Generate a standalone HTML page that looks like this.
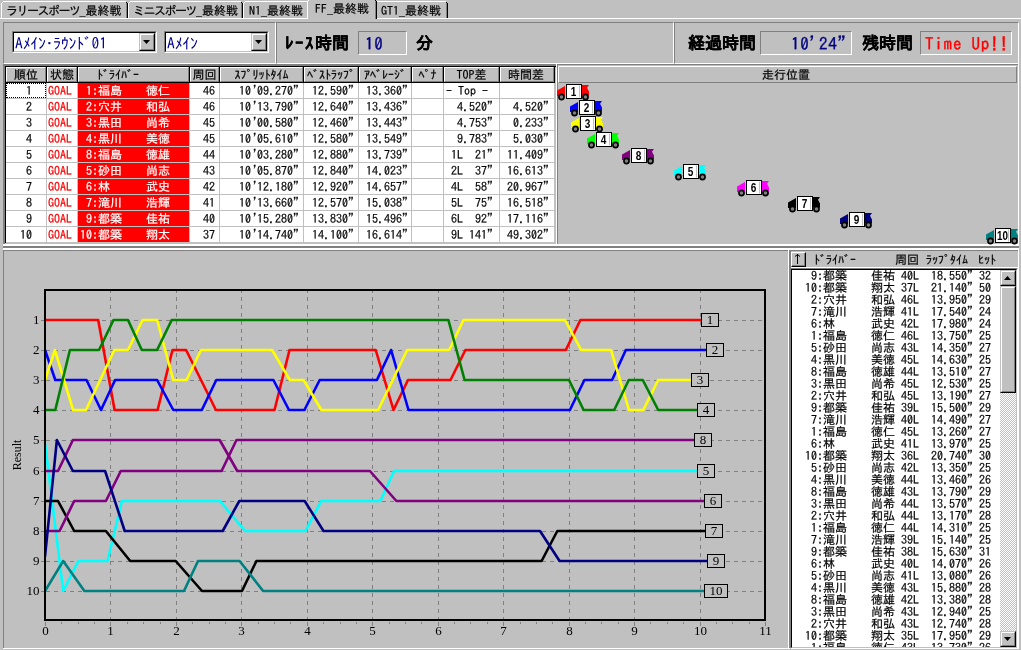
<!DOCTYPE html>
<html lang="ja"><head><meta charset="utf-8"><title>Race</title><style>
html,body{margin:0;padding:0;}
body{width:1021px;height:650px;background:#c0c0c0;overflow:hidden;position:relative;font-family:"IPAGothic","Liberation Mono",monospace;font-size:12px;color:#000;}
div,span{box-sizing:border-box;}
#app{position:absolute;left:0;top:0;width:1021px;height:650px;will-change:transform;-webkit-text-stroke:0.2px;}
.a{position:absolute;}
.t{position:absolute;white-space:pre;line-height:1;}
</style></head><body>
<div id="app">
<div class="a" style="left:0px;top:18px;width:1021px;height:1px;background:#fff"></div>
<div class="a" style="left:1px;top:3px;width:1px;height:15px;background:#fff"></div>
<div class="a" style="left:2px;top:2px;width:1px;height:1px;background:#fff"></div>
<div class="a" style="left:3px;top:1px;width:123px;height:1px;background:#fff"></div>
<div class="a" style="left:126px;top:3px;width:1px;height:15px;background:#808080"></div>
<div class="a" style="left:127px;top:3px;width:1px;height:15px;background:#000"></div>
<div class="a" style="left:126px;top:2px;width:1px;height:1px;background:#000"></div>
<div class="t" style="left:6px;top:4px;font-family:'IPAGothic','Liberation Mono',monospace;font-size:12px;"><span style="letter-spacing:-1.5px">ラリースポーツ</span>_最終戦</div>
<div class="a" style="left:128px;top:3px;width:1px;height:15px;background:#fff"></div>
<div class="a" style="left:129px;top:2px;width:1px;height:1px;background:#fff"></div>
<div class="a" style="left:130px;top:1px;width:111px;height:1px;background:#fff"></div>
<div class="a" style="left:241px;top:3px;width:1px;height:15px;background:#808080"></div>
<div class="a" style="left:242px;top:3px;width:1px;height:15px;background:#000"></div>
<div class="a" style="left:241px;top:2px;width:1px;height:1px;background:#000"></div>
<div class="t" style="left:133px;top:4px;font-family:'IPAGothic','Liberation Mono',monospace;font-size:12px;"><span style="letter-spacing:-1.5px">ミニスポーツ</span>_最終戦</div>
<div class="a" style="left:243px;top:3px;width:1px;height:15px;background:#fff"></div>
<div class="a" style="left:244px;top:2px;width:1px;height:1px;background:#fff"></div>
<div class="a" style="left:245px;top:1px;width:62px;height:1px;background:#fff"></div>
<div class="a" style="left:307px;top:3px;width:1px;height:15px;background:#808080"></div>
<div class="a" style="left:308px;top:3px;width:1px;height:15px;background:#000"></div>
<div class="a" style="left:307px;top:2px;width:1px;height:1px;background:#000"></div>
<div class="t" style="left:249px;top:4px;font-family:'IPAGothic','Liberation Mono',monospace;font-size:12px;">N1_最終戦</div>
<div class="a" style="left:377px;top:1px;width:69px;height:1px;background:#fff"></div>
<div class="a" style="left:446px;top:3px;width:1px;height:15px;background:#808080"></div>
<div class="a" style="left:447px;top:3px;width:1px;height:15px;background:#000"></div>
<div class="a" style="left:446px;top:2px;width:1px;height:1px;background:#000"></div>
<div class="t" style="left:381px;top:4px;font-family:'IPAGothic','Liberation Mono',monospace;font-size:12px;">GT1_最終戦</div>
<div class="a" style="left:307px;top:0px;width:70px;height:20px;background:#c0c0c0"></div>
<div class="a" style="left:307px;top:1px;width:1px;height:18px;background:#fff"></div>
<div class="a" style="left:308px;top:0px;width:1px;height:1px;background:#fff"></div>
<div class="a" style="left:309px;top:-1px;width:66px;height:1px;background:#fff"></div>
<div class="a" style="left:375px;top:1px;width:1px;height:18px;background:#808080"></div>
<div class="a" style="left:376px;top:1px;width:1px;height:18px;background:#000"></div>
<div class="a" style="left:375px;top:0px;width:1px;height:1px;background:#000"></div>
<div class="t" style="left:315px;top:2px;font-family:'IPAGothic','Liberation Mono',monospace;font-size:12px;">FF_最終戦</div>
<div class="a" style="left:3px;top:22px;width:273px;height:42px;border-top:1px solid #808080;border-left:1px solid #808080;border-bottom:1px solid #fff;border-right:1px solid #fff;"></div>
<div class="a" style="left:276px;top:22px;width:398px;height:42px;border-top:1px solid #808080;border-left:1px solid #808080;border-bottom:1px solid #fff;border-right:1px solid #fff;"></div>
<div class="a" style="left:674px;top:22px;width:345px;height:42px;border-top:1px solid #808080;border-left:1px solid #808080;border-bottom:1px solid #fff;border-right:1px solid #fff;"></div>
<div class="a" style="left:12px;top:31px;width:145px;height:22px;border-top:1px solid #808080;border-left:1px solid #808080;border-bottom:1px solid #fff;border-right:1px solid #fff;"></div>
<div class="a" style="left:13px;top:32px;width:143px;height:20px;border-top:1px solid #000;border-left:1px solid #000;border-bottom:1px solid #c0c0c0;border-right:1px solid #c0c0c0;background:#fff;"></div>
<div class="a" style="left:139px;top:33px;width:16px;height:18px;border-top:1px solid #c0c0c0;border-left:1px solid #c0c0c0;border-bottom:1px solid #000;border-right:1px solid #000;"></div>
<div class="a" style="left:140px;top:34px;width:14px;height:16px;border-top:1px solid #fff;border-left:1px solid #fff;border-bottom:1px solid #808080;border-right:1px solid #808080;background:#c0c0c0;"></div>
<svg class="a" style="left:143px;top:40px" width="7" height="4"><polygon points="0,0 7,0 3.5,4" fill="#000"/></svg>
<div class="t" style="left:15px;top:36px;color:#000090;font-size:15.5px;letter-spacing:-0.1px;-webkit-text-stroke:0;">Aﾒｲﾝ･ﾗｳﾝﾄ<span style="position:relative;left:-2px">ﾞ</span>01</div>
<div class="a" style="left:164px;top:31px;width:105px;height:22px;border-top:1px solid #808080;border-left:1px solid #808080;border-bottom:1px solid #fff;border-right:1px solid #fff;"></div>
<div class="a" style="left:165px;top:32px;width:103px;height:20px;border-top:1px solid #000;border-left:1px solid #000;border-bottom:1px solid #c0c0c0;border-right:1px solid #c0c0c0;background:#fff;"></div>
<div class="a" style="left:251px;top:33px;width:16px;height:18px;border-top:1px solid #c0c0c0;border-left:1px solid #c0c0c0;border-bottom:1px solid #000;border-right:1px solid #000;"></div>
<div class="a" style="left:252px;top:34px;width:14px;height:16px;border-top:1px solid #fff;border-left:1px solid #fff;border-bottom:1px solid #808080;border-right:1px solid #808080;background:#c0c0c0;"></div>
<svg class="a" style="left:255px;top:40px" width="7" height="4"><polygon points="0,0 7,0 3.5,4" fill="#000"/></svg>
<div class="t" style="left:167px;top:36px;color:#000090;font-size:15.5px;letter-spacing:-0.1px;-webkit-text-stroke:0;">Aﾒｲﾝ</div>
<div class="t" style="left:285px;top:34px;font-weight:bold;font-size:17px;"><span style="letter-spacing:1.5px">ﾚｰｽ</span>時間</div>
<div class="a" style="left:358px;top:31px;width:49px;height:24px;border-top:1px solid #808080;border-left:1px solid #808080;border-bottom:1px solid #fff;border-right:1px solid #fff;"></div>
<div class="t" style="left:365px;top:35px;color:#000080;font-size:17px;-webkit-text-stroke:0.35px;letter-spacing:0.8px;">10</div>
<div class="t" style="left:416px;top:34px;font-weight:bold;font-size:17px;">分</div>
<div class="t" style="left:688px;top:34px;font-weight:bold;font-size:17px;">経過時間</div>
<div class="a" style="left:760px;top:31px;width:92px;height:24px;border-top:1px solid #808080;border-left:1px solid #808080;border-bottom:1px solid #fff;border-right:1px solid #fff;"></div>
<div class="t" style="left:791px;top:35px;color:#000080;font-size:17px;-webkit-text-stroke:0.35px;letter-spacing:0.8px;">10'24"</div>
<div class="t" style="left:862px;top:34px;font-weight:bold;font-size:17px;">残時間</div>
<div class="a" style="left:920px;top:31px;width:92px;height:24px;border-top:1px solid #808080;border-left:1px solid #808080;border-bottom:1px solid #fff;border-right:1px solid #fff;"></div>
<div class="t" style="left:925px;top:35px;color:#ff0000;font-size:17px;-webkit-text-stroke:0.35px;letter-spacing:0.8px;">Time Up!!</div>
<div class="a" style="left:3px;top:64px;width:555px;height:1px;background:#808080"></div>
<div class="a" style="left:3px;top:64px;width:1px;height:181px;background:#808080"></div>
<div class="a" style="left:4px;top:65px;width:553px;height:1px;background:#808080"></div>
<div class="a" style="left:4px;top:65px;width:1px;height:179px;background:#808080"></div>
<div class="a" style="left:5px;top:66px;width:551px;height:1px;background:#000"></div>
<div class="a" style="left:5px;top:66px;width:1px;height:177px;background:#000"></div>
<div class="a" style="left:6px;top:83px;width:549px;height:160px;background:#fff"></div>
<div class="a" style="left:6px;top:67px;width:40px;height:15px;background:#c0c0c0;border-top:1px solid #fff;border-left:1px solid #fff;border-bottom:1px solid #808080;border-right:1px solid #808080;"></div>
<div class="a" style="left:46px;top:67px;width:1px;height:16px;background:#000"></div>
<div class="t" style="left:6px;top:68px;width:40px;text-align:center;font-size:12px;">順位</div>
<div class="a" style="left:47px;top:67px;width:30px;height:15px;background:#c0c0c0;border-top:1px solid #fff;border-left:1px solid #fff;border-bottom:1px solid #808080;border-right:1px solid #808080;"></div>
<div class="a" style="left:77px;top:67px;width:1px;height:16px;background:#000"></div>
<div class="t" style="left:47px;top:68px;width:30px;text-align:center;font-size:12px;">状態</div>
<div class="a" style="left:78px;top:67px;width:111px;height:15px;background:#c0c0c0;border-top:1px solid #fff;border-left:1px solid #fff;border-bottom:1px solid #808080;border-right:1px solid #808080;"></div>
<div class="a" style="left:189px;top:67px;width:1px;height:16px;background:#000"></div>
<div class="t" style="left:97px;top:68px;">ﾄ<span style="position:relative;left:-2px">ﾞ</span>ﾗｲﾊ<span style="position:relative;left:-2px">ﾞ</span>ｰ</div>
<div class="a" style="left:190px;top:67px;width:29px;height:15px;background:#c0c0c0;border-top:1px solid #fff;border-left:1px solid #fff;border-bottom:1px solid #808080;border-right:1px solid #808080;"></div>
<div class="a" style="left:219px;top:67px;width:1px;height:16px;background:#000"></div>
<div class="t" style="left:190px;top:68px;width:29px;text-align:center;font-size:12px;">周回</div>
<div class="a" style="left:220px;top:67px;width:83px;height:15px;background:#c0c0c0;border-top:1px solid #fff;border-left:1px solid #fff;border-bottom:1px solid #808080;border-right:1px solid #808080;"></div>
<div class="a" style="left:303px;top:67px;width:1px;height:16px;background:#000"></div>
<div class="t" style="left:220px;top:68px;width:83px;text-align:center;font-size:12px;">ｽﾌ<span style="position:relative;left:-2px">ﾟ</span>ﾘｯﾄﾀｲﾑ</div>
<div class="a" style="left:304px;top:67px;width:54px;height:15px;background:#c0c0c0;border-top:1px solid #fff;border-left:1px solid #fff;border-bottom:1px solid #808080;border-right:1px solid #808080;"></div>
<div class="a" style="left:358px;top:67px;width:1px;height:16px;background:#000"></div>
<div class="t" style="left:304px;top:68px;width:54px;text-align:center;font-size:12px;">ﾍ<span style="position:relative;left:-2px">ﾞ</span>ｽﾄﾗｯﾌ<span style="position:relative;left:-2px">ﾟ</span></div>
<div class="a" style="left:359px;top:67px;width:52px;height:15px;background:#c0c0c0;border-top:1px solid #fff;border-left:1px solid #fff;border-bottom:1px solid #808080;border-right:1px solid #808080;"></div>
<div class="a" style="left:411px;top:67px;width:1px;height:16px;background:#000"></div>
<div class="t" style="left:359px;top:68px;width:52px;text-align:center;font-size:12px;">ｱﾍ<span style="position:relative;left:-2px">ﾞ</span>ﾚｰｼ<span style="position:relative;left:-2px">ﾞ</span></div>
<div class="a" style="left:412px;top:67px;width:31px;height:15px;background:#c0c0c0;border-top:1px solid #fff;border-left:1px solid #fff;border-bottom:1px solid #808080;border-right:1px solid #808080;"></div>
<div class="a" style="left:443px;top:67px;width:1px;height:16px;background:#000"></div>
<div class="t" style="left:412px;top:68px;width:31px;text-align:center;font-size:12px;">ﾍ<span style="position:relative;left:-2px">ﾟ</span>ﾅ</div>
<div class="a" style="left:444px;top:67px;width:55px;height:15px;background:#c0c0c0;border-top:1px solid #fff;border-left:1px solid #fff;border-bottom:1px solid #808080;border-right:1px solid #808080;"></div>
<div class="a" style="left:499px;top:67px;width:1px;height:16px;background:#000"></div>
<div class="t" style="left:444px;top:68px;width:55px;text-align:center;font-size:12px;">TOP差</div>
<div class="a" style="left:500px;top:67px;width:54px;height:15px;background:#c0c0c0;border-top:1px solid #fff;border-left:1px solid #fff;border-bottom:1px solid #808080;border-right:1px solid #808080;"></div>
<div class="a" style="left:554px;top:67px;width:1px;height:16px;background:#000"></div>
<div class="t" style="left:508px;top:68px;">時間差</div>
<div class="a" style="left:6px;top:82px;width:549px;height:1px;background:#000"></div>
<div class="a" style="left:6px;top:98px;width:549px;height:1px;background:#c0c0c0"></div>
<div class="a" style="left:78px;top:83px;width:112px;height:15px;background:#ff0000"></div>
<div class="t" style="right:989px;top:84px;">1</div>
<div class="t" style="left:48px;top:84px;color:#ff0000">GOAL</div>
<div class="t" style="left:80px;top:84px;color:#fff"> 1:福島　　徳仁</div>
<div class="t" style="right:806px;top:84px;">46</div>
<div class="t" style="right:722px;top:84px;">10<span style="position:relative;left:2px">'</span>09.270"</div>
<div class="t" style="right:667px;top:84px;">12.590"</div>
<div class="t" style="right:613px;top:84px;">13.360"</div>
<div class="t" style="left:446px;top:84px;">- Top -</div>
<div class="t" style="right:472px;top:84px;"></div>
<div class="a" style="left:6px;top:114px;width:549px;height:1px;background:#c0c0c0"></div>
<div class="a" style="left:78px;top:99px;width:112px;height:15px;background:#ff0000"></div>
<div class="t" style="right:989px;top:100px;">2</div>
<div class="t" style="left:48px;top:100px;color:#ff0000">GOAL</div>
<div class="t" style="left:80px;top:100px;color:#fff"> 2:穴井　　和弘</div>
<div class="t" style="right:806px;top:100px;">46</div>
<div class="t" style="right:722px;top:100px;">10<span style="position:relative;left:2px">'</span>13.790"</div>
<div class="t" style="right:667px;top:100px;">12.640"</div>
<div class="t" style="right:613px;top:100px;">13.436"</div>
<div class="t" style="right:528px;top:100px;">  4.520"</div>
<div class="t" style="right:472px;top:100px;">4.520"</div>
<div class="a" style="left:6px;top:130px;width:549px;height:1px;background:#c0c0c0"></div>
<div class="a" style="left:78px;top:115px;width:112px;height:15px;background:#ff0000"></div>
<div class="t" style="right:989px;top:116px;">3</div>
<div class="t" style="left:48px;top:116px;color:#ff0000">GOAL</div>
<div class="t" style="left:80px;top:116px;color:#fff"> 3:黒田　　尚希</div>
<div class="t" style="right:806px;top:116px;">45</div>
<div class="t" style="right:722px;top:116px;">10<span style="position:relative;left:2px">'</span>00.580"</div>
<div class="t" style="right:667px;top:116px;">12.460"</div>
<div class="t" style="right:613px;top:116px;">13.443"</div>
<div class="t" style="right:528px;top:116px;">  4.753"</div>
<div class="t" style="right:472px;top:116px;">0.233"</div>
<div class="a" style="left:6px;top:146px;width:549px;height:1px;background:#c0c0c0"></div>
<div class="a" style="left:78px;top:131px;width:112px;height:15px;background:#ff0000"></div>
<div class="t" style="right:989px;top:132px;">4</div>
<div class="t" style="left:48px;top:132px;color:#ff0000">GOAL</div>
<div class="t" style="left:80px;top:132px;color:#fff"> 4:黒川　　美徳</div>
<div class="t" style="right:806px;top:132px;">45</div>
<div class="t" style="right:722px;top:132px;">10<span style="position:relative;left:2px">'</span>05.610"</div>
<div class="t" style="right:667px;top:132px;">12.580"</div>
<div class="t" style="right:613px;top:132px;">13.549"</div>
<div class="t" style="right:528px;top:132px;">  9.783"</div>
<div class="t" style="right:472px;top:132px;">5.030"</div>
<div class="a" style="left:6px;top:162px;width:549px;height:1px;background:#c0c0c0"></div>
<div class="a" style="left:78px;top:147px;width:112px;height:15px;background:#ff0000"></div>
<div class="t" style="right:989px;top:148px;">5</div>
<div class="t" style="left:48px;top:148px;color:#ff0000">GOAL</div>
<div class="t" style="left:80px;top:148px;color:#fff"> 8:福島　　徳雄</div>
<div class="t" style="right:806px;top:148px;">44</div>
<div class="t" style="right:722px;top:148px;">10<span style="position:relative;left:2px">'</span>03.280"</div>
<div class="t" style="right:667px;top:148px;">12.880"</div>
<div class="t" style="right:613px;top:148px;">13.739"</div>
<div class="t" style="right:528px;top:148px;">1L  21"</div>
<div class="t" style="right:472px;top:148px;">11.409"</div>
<div class="a" style="left:6px;top:178px;width:549px;height:1px;background:#c0c0c0"></div>
<div class="a" style="left:78px;top:163px;width:112px;height:15px;background:#ff0000"></div>
<div class="t" style="right:989px;top:164px;">6</div>
<div class="t" style="left:48px;top:164px;color:#ff0000">GOAL</div>
<div class="t" style="left:80px;top:164px;color:#fff"> 5:砂田　　尚志</div>
<div class="t" style="right:806px;top:164px;">43</div>
<div class="t" style="right:722px;top:164px;">10<span style="position:relative;left:2px">'</span>05.870"</div>
<div class="t" style="right:667px;top:164px;">12.840"</div>
<div class="t" style="right:613px;top:164px;">14.023"</div>
<div class="t" style="right:528px;top:164px;">2L  37"</div>
<div class="t" style="right:472px;top:164px;">16.613"</div>
<div class="a" style="left:6px;top:194px;width:549px;height:1px;background:#c0c0c0"></div>
<div class="a" style="left:78px;top:179px;width:112px;height:15px;background:#ff0000"></div>
<div class="t" style="right:989px;top:180px;">7</div>
<div class="t" style="left:48px;top:180px;color:#ff0000">GOAL</div>
<div class="t" style="left:80px;top:180px;color:#fff"> 6:林　　　武史</div>
<div class="t" style="right:806px;top:180px;">42</div>
<div class="t" style="right:722px;top:180px;">10<span style="position:relative;left:2px">'</span>12.180"</div>
<div class="t" style="right:667px;top:180px;">12.920"</div>
<div class="t" style="right:613px;top:180px;">14.657"</div>
<div class="t" style="right:528px;top:180px;">4L  58"</div>
<div class="t" style="right:472px;top:180px;">20.967"</div>
<div class="a" style="left:6px;top:210px;width:549px;height:1px;background:#c0c0c0"></div>
<div class="a" style="left:78px;top:195px;width:112px;height:15px;background:#ff0000"></div>
<div class="t" style="right:989px;top:196px;">8</div>
<div class="t" style="left:48px;top:196px;color:#ff0000">GOAL</div>
<div class="t" style="left:80px;top:196px;color:#fff"> 7:滝川　　浩輝</div>
<div class="t" style="right:806px;top:196px;">41</div>
<div class="t" style="right:722px;top:196px;">10<span style="position:relative;left:2px">'</span>13.660"</div>
<div class="t" style="right:667px;top:196px;">12.570"</div>
<div class="t" style="right:613px;top:196px;">15.038"</div>
<div class="t" style="right:528px;top:196px;">5L  75"</div>
<div class="t" style="right:472px;top:196px;">16.518"</div>
<div class="a" style="left:6px;top:226px;width:549px;height:1px;background:#c0c0c0"></div>
<div class="a" style="left:78px;top:211px;width:112px;height:15px;background:#ff0000"></div>
<div class="t" style="right:989px;top:212px;">9</div>
<div class="t" style="left:48px;top:212px;color:#ff0000">GOAL</div>
<div class="t" style="left:80px;top:212px;color:#fff"> 9:都築　　佳祐</div>
<div class="t" style="right:806px;top:212px;">40</div>
<div class="t" style="right:722px;top:212px;">10<span style="position:relative;left:2px">'</span>15.280"</div>
<div class="t" style="right:667px;top:212px;">13.830"</div>
<div class="t" style="right:613px;top:212px;">15.496"</div>
<div class="t" style="right:528px;top:212px;">6L  92"</div>
<div class="t" style="right:472px;top:212px;">17.116"</div>
<div class="a" style="left:6px;top:242px;width:549px;height:1px;background:#c0c0c0"></div>
<div class="a" style="left:78px;top:227px;width:112px;height:15px;background:#ff0000"></div>
<div class="t" style="right:989px;top:228px;">10</div>
<div class="t" style="left:48px;top:228px;color:#ff0000">GOAL</div>
<div class="t" style="left:80px;top:228px;color:#fff">10:都築　　翔太</div>
<div class="t" style="right:806px;top:228px;">37</div>
<div class="t" style="right:722px;top:228px;">10<span style="position:relative;left:2px">'</span>14.740"</div>
<div class="t" style="right:667px;top:228px;">14.100"</div>
<div class="t" style="right:613px;top:228px;">16.614"</div>
<div class="t" style="right:528px;top:228px;">9L 141"</div>
<div class="t" style="right:472px;top:228px;">49.302"</div>
<div class="a" style="left:46px;top:83px;width:1px;height:160px;background:#c0c0c0"></div>
<div class="a" style="left:77px;top:83px;width:1px;height:160px;background:#c0c0c0"></div>
<div class="a" style="left:189px;top:83px;width:1px;height:160px;background:#c0c0c0"></div>
<div class="a" style="left:219px;top:83px;width:1px;height:160px;background:#c0c0c0"></div>
<div class="a" style="left:303px;top:83px;width:1px;height:160px;background:#c0c0c0"></div>
<div class="a" style="left:358px;top:83px;width:1px;height:160px;background:#c0c0c0"></div>
<div class="a" style="left:411px;top:83px;width:1px;height:160px;background:#c0c0c0"></div>
<div class="a" style="left:443px;top:83px;width:1px;height:160px;background:#c0c0c0"></div>
<div class="a" style="left:499px;top:83px;width:1px;height:160px;background:#c0c0c0"></div>
<div class="a" style="left:554px;top:83px;width:1px;height:160px;background:#c0c0c0"></div>
<div class="a" style="left:6px;top:83px;width:40px;height:15px;border:1px dotted #000"></div>
<div class="a" style="left:556px;top:64px;width:1px;height:181px;background:#fff"></div>
<div class="a" style="left:3px;top:244px;width:1016px;height:2px;background:#fff"></div>
<div class="a" style="left:3px;top:246px;width:1016px;height:2px;background:#808080"></div>
<div class="a" style="left:3px;top:248px;width:1016px;height:2px;background:#fff"></div>
<div class="a" style="left:557px;top:64px;width:1px;height:180px;background:#808080"></div>
<div class="a" style="left:557px;top:64px;width:461px;height:1px;background:#808080"></div>
<div class="a" style="left:1018px;top:64px;width:1px;height:182px;background:#fff"></div>
<div class="a" style="left:558px;top:66px;width:459px;height:17px;border-top:1px solid #fff;border-left:1px solid #fff;border-bottom:1px solid #808080;border-right:1px solid #808080;"></div>
<div class="t" style="left:762px;top:68px;font-size:12px;">走行位置</div>
<svg class="a" style="left:557px;top:84px;overflow:visible" width="34" height="18" viewBox="0 0 34 18"><polygon points="8,2 8,12 0,12 0,6.5" fill="#ff0000"/><polygon points="25,1 32,1 30,3.8 32,7.5 32,11.5 25,11.5" fill="#ff0000"/><rect x="9.5" y="0.5" width="15" height="14" fill="#fff" stroke="#000" stroke-width="1"/><line x1="22.5" y1="1.5" x2="22.5" y2="13.5" stroke="#c0c0c0" stroke-width="1"/><circle cx="4.5" cy="13" r="2.6" fill="#808080" stroke="#000" stroke-width="1.6"/><circle cx="28.5" cy="13" r="2.6" fill="#808080" stroke="#000" stroke-width="1.6"/><text x="16.5" y="12" text-anchor="middle" font-family="Liberation Sans,sans-serif" font-weight="bold" font-size="12" fill="#000" textLength="5.6" lengthAdjust="spacingAndGlyphs">1</text></svg>
<svg class="a" style="left:570px;top:100px;overflow:visible" width="34" height="18" viewBox="0 0 34 18"><polygon points="8,2 8,12 0,12 0,6.5" fill="#0000ff"/><polygon points="25,1 32,1 30,3.8 32,7.5 32,11.5 25,11.5" fill="#0000ff"/><rect x="9.5" y="0.5" width="15" height="14" fill="#fff" stroke="#000" stroke-width="1"/><line x1="22.5" y1="1.5" x2="22.5" y2="13.5" stroke="#c0c0c0" stroke-width="1"/><circle cx="4.5" cy="13" r="2.6" fill="#808080" stroke="#000" stroke-width="1.6"/><circle cx="28.5" cy="13" r="2.6" fill="#808080" stroke="#000" stroke-width="1.6"/><text x="16.5" y="12" text-anchor="middle" font-family="Liberation Sans,sans-serif" font-weight="bold" font-size="12" fill="#000" textLength="5.6" lengthAdjust="spacingAndGlyphs">2</text></svg>
<svg class="a" style="left:571px;top:116px;overflow:visible" width="34" height="18" viewBox="0 0 34 18"><polygon points="8,2 8,12 0,12 0,6.5" fill="#ffff00"/><polygon points="25,1 32,1 30,3.8 32,7.5 32,11.5 25,11.5" fill="#ffff00"/><rect x="9.5" y="0.5" width="15" height="14" fill="#fff" stroke="#000" stroke-width="1"/><line x1="22.5" y1="1.5" x2="22.5" y2="13.5" stroke="#c0c0c0" stroke-width="1"/><circle cx="4.5" cy="13" r="2.6" fill="#808080" stroke="#000" stroke-width="1.6"/><circle cx="28.5" cy="13" r="2.6" fill="#808080" stroke="#000" stroke-width="1.6"/><text x="16.5" y="12" text-anchor="middle" font-family="Liberation Sans,sans-serif" font-weight="bold" font-size="12" fill="#000" textLength="5.6" lengthAdjust="spacingAndGlyphs">3</text></svg>
<svg class="a" style="left:587px;top:132px;overflow:visible" width="34" height="18" viewBox="0 0 34 18"><polygon points="8,2 8,12 0,12 0,6.5" fill="#00ff00"/><polygon points="25,1 32,1 30,3.8 32,7.5 32,11.5 25,11.5" fill="#00ff00"/><rect x="9.5" y="0.5" width="15" height="14" fill="#fff" stroke="#000" stroke-width="1"/><line x1="22.5" y1="1.5" x2="22.5" y2="13.5" stroke="#c0c0c0" stroke-width="1"/><circle cx="4.5" cy="13" r="2.6" fill="#808080" stroke="#000" stroke-width="1.6"/><circle cx="28.5" cy="13" r="2.6" fill="#808080" stroke="#000" stroke-width="1.6"/><text x="16.5" y="12" text-anchor="middle" font-family="Liberation Sans,sans-serif" font-weight="bold" font-size="12" fill="#000" textLength="5.6" lengthAdjust="spacingAndGlyphs">4</text></svg>
<svg class="a" style="left:622px;top:148px;overflow:visible" width="34" height="18" viewBox="0 0 34 18"><polygon points="8,2 8,12 0,12 0,6.5" fill="#800080"/><polygon points="25,1 32,1 30,3.8 32,7.5 32,11.5 25,11.5" fill="#800080"/><rect x="9.5" y="0.5" width="15" height="14" fill="#fff" stroke="#000" stroke-width="1"/><line x1="22.5" y1="1.5" x2="22.5" y2="13.5" stroke="#c0c0c0" stroke-width="1"/><circle cx="4.5" cy="13" r="2.6" fill="#808080" stroke="#000" stroke-width="1.6"/><circle cx="28.5" cy="13" r="2.6" fill="#808080" stroke="#000" stroke-width="1.6"/><text x="16.5" y="12" text-anchor="middle" font-family="Liberation Sans,sans-serif" font-weight="bold" font-size="12" fill="#000" textLength="5.6" lengthAdjust="spacingAndGlyphs">8</text></svg>
<svg class="a" style="left:674px;top:164px;overflow:visible" width="34" height="18" viewBox="0 0 34 18"><polygon points="8,2 8,12 0,12 0,6.5" fill="#00ffff"/><polygon points="25,1 32,1 30,3.8 32,7.5 32,11.5 25,11.5" fill="#00ffff"/><rect x="9.5" y="0.5" width="15" height="14" fill="#fff" stroke="#000" stroke-width="1"/><line x1="22.5" y1="1.5" x2="22.5" y2="13.5" stroke="#c0c0c0" stroke-width="1"/><circle cx="4.5" cy="13" r="2.6" fill="#808080" stroke="#000" stroke-width="1.6"/><circle cx="28.5" cy="13" r="2.6" fill="#808080" stroke="#000" stroke-width="1.6"/><text x="16.5" y="12" text-anchor="middle" font-family="Liberation Sans,sans-serif" font-weight="bold" font-size="12" fill="#000" textLength="5.6" lengthAdjust="spacingAndGlyphs">5</text></svg>
<svg class="a" style="left:737px;top:180px;overflow:visible" width="34" height="18" viewBox="0 0 34 18"><polygon points="8,2 8,12 0,12 0,6.5" fill="#ff00ff"/><polygon points="25,1 32,1 30,3.8 32,7.5 32,11.5 25,11.5" fill="#ff00ff"/><rect x="9.5" y="0.5" width="15" height="14" fill="#fff" stroke="#000" stroke-width="1"/><line x1="22.5" y1="1.5" x2="22.5" y2="13.5" stroke="#c0c0c0" stroke-width="1"/><circle cx="4.5" cy="13" r="2.6" fill="#808080" stroke="#000" stroke-width="1.6"/><circle cx="28.5" cy="13" r="2.6" fill="#808080" stroke="#000" stroke-width="1.6"/><text x="16.5" y="12" text-anchor="middle" font-family="Liberation Sans,sans-serif" font-weight="bold" font-size="12" fill="#000" textLength="5.6" lengthAdjust="spacingAndGlyphs">6</text></svg>
<svg class="a" style="left:788px;top:196px;overflow:visible" width="34" height="18" viewBox="0 0 34 18"><polygon points="8,2 8,12 0,12 0,6.5" fill="#000000"/><polygon points="25,1 32,1 30,3.8 32,7.5 32,11.5 25,11.5" fill="#000000"/><rect x="9.5" y="0.5" width="15" height="14" fill="#fff" stroke="#000" stroke-width="1"/><line x1="22.5" y1="1.5" x2="22.5" y2="13.5" stroke="#c0c0c0" stroke-width="1"/><circle cx="4.5" cy="13" r="2.6" fill="#808080" stroke="#000" stroke-width="1.6"/><circle cx="28.5" cy="13" r="2.6" fill="#808080" stroke="#000" stroke-width="1.6"/><text x="16.5" y="12" text-anchor="middle" font-family="Liberation Sans,sans-serif" font-weight="bold" font-size="12" fill="#000" textLength="5.6" lengthAdjust="spacingAndGlyphs">7</text></svg>
<svg class="a" style="left:840px;top:212px;overflow:visible" width="34" height="18" viewBox="0 0 34 18"><polygon points="8,2 8,12 0,12 0,6.5" fill="#000080"/><polygon points="25,1 32,1 30,3.8 32,7.5 32,11.5 25,11.5" fill="#000080"/><rect x="9.5" y="0.5" width="15" height="14" fill="#fff" stroke="#000" stroke-width="1"/><line x1="22.5" y1="1.5" x2="22.5" y2="13.5" stroke="#c0c0c0" stroke-width="1"/><circle cx="4.5" cy="13" r="2.6" fill="#808080" stroke="#000" stroke-width="1.6"/><circle cx="28.5" cy="13" r="2.6" fill="#808080" stroke="#000" stroke-width="1.6"/><text x="16.5" y="12" text-anchor="middle" font-family="Liberation Sans,sans-serif" font-weight="bold" font-size="12" fill="#000" textLength="5.6" lengthAdjust="spacingAndGlyphs">9</text></svg>
<svg class="a" style="left:986px;top:228px;overflow:visible" width="34" height="18" viewBox="0 0 34 18"><polygon points="8,2 8,12 0,12 0,6.5" fill="#008080"/><polygon points="25,1 32,1 30,3.8 32,7.5 32,11.5 25,11.5" fill="#008080"/><rect x="9.5" y="0.5" width="15" height="14" fill="#fff" stroke="#000" stroke-width="1"/><line x1="22.5" y1="1.5" x2="22.5" y2="13.5" stroke="#c0c0c0" stroke-width="1"/><circle cx="4.5" cy="13" r="2.6" fill="#808080" stroke="#000" stroke-width="1.6"/><circle cx="28.5" cy="13" r="2.6" fill="#808080" stroke="#000" stroke-width="1.6"/><text x="16.5" y="12" text-anchor="middle" font-family="Liberation Sans,sans-serif" font-weight="bold" font-size="12" fill="#000" textLength="11" lengthAdjust="spacingAndGlyphs">10</text></svg>
<div class="a" style="left:3px;top:250px;width:785px;height:1px;background:#808080"></div>
<div class="a" style="left:3px;top:250px;width:1px;height:398px;background:#808080"></div>
<div class="a" style="left:3px;top:648px;width:787px;height:1px;background:#fff"></div>
<svg class="a" style="left:0;top:250px" width="790" height="400" viewBox="0 250 790 400"><defs><clipPath id="plotclip"><rect x="45" y="290" width="720" height="330"/></clipPath></defs><line x1="110.5" y1="289" x2="110.5" y2="619" stroke="#808080" stroke-width="1" stroke-dasharray="4,4"/><line x1="176.5" y1="289" x2="176.5" y2="619" stroke="#808080" stroke-width="1" stroke-dasharray="4,4"/><line x1="241.5" y1="289" x2="241.5" y2="619" stroke="#808080" stroke-width="1" stroke-dasharray="4,4"/><line x1="307.5" y1="289" x2="307.5" y2="619" stroke="#808080" stroke-width="1" stroke-dasharray="4,4"/><line x1="372.5" y1="289" x2="372.5" y2="619" stroke="#808080" stroke-width="1" stroke-dasharray="4,4"/><line x1="438.5" y1="289" x2="438.5" y2="619" stroke="#808080" stroke-width="1" stroke-dasharray="4,4"/><line x1="503.5" y1="289" x2="503.5" y2="619" stroke="#808080" stroke-width="1" stroke-dasharray="4,4"/><line x1="569.5" y1="289" x2="569.5" y2="619" stroke="#808080" stroke-width="1" stroke-dasharray="4,4"/><line x1="634.5" y1="289" x2="634.5" y2="619" stroke="#808080" stroke-width="1" stroke-dasharray="4,4"/><line x1="700.5" y1="289" x2="700.5" y2="619" stroke="#808080" stroke-width="1" stroke-dasharray="4,4"/><line x1="46" y1="320.5" x2="765" y2="320.5" stroke="#808080" stroke-width="1" stroke-dasharray="4,4"/><line x1="46" y1="350.5" x2="765" y2="350.5" stroke="#808080" stroke-width="1" stroke-dasharray="4,4"/><line x1="46" y1="380.5" x2="765" y2="380.5" stroke="#808080" stroke-width="1" stroke-dasharray="4,4"/><line x1="46" y1="410.5" x2="765" y2="410.5" stroke="#808080" stroke-width="1" stroke-dasharray="4,4"/><line x1="46" y1="440.5" x2="765" y2="440.5" stroke="#808080" stroke-width="1" stroke-dasharray="4,4"/><line x1="46" y1="471.5" x2="765" y2="471.5" stroke="#808080" stroke-width="1" stroke-dasharray="4,4"/><line x1="46" y1="501.5" x2="765" y2="501.5" stroke="#808080" stroke-width="1" stroke-dasharray="4,4"/><line x1="46" y1="531.5" x2="765" y2="531.5" stroke="#808080" stroke-width="1" stroke-dasharray="4,4"/><line x1="46" y1="561.5" x2="765" y2="561.5" stroke="#808080" stroke-width="1" stroke-dasharray="4,4"/><line x1="46" y1="591.5" x2="765" y2="591.5" stroke="#808080" stroke-width="1" stroke-dasharray="4,4"/><polyline clip-path="url(#plotclip)" points="45.0,320.0 98.2,320.0 114.6,410.0 157.6,410.0 172.5,350.0 186.1,350.0 215.9,410.0 274.5,410.0 289.5,350.0 375.7,350.0 393.5,410.0 408.0,380.0 450.5,380.0 465.4,350.0 565.8,350.0 580.4,320.0 701.0,320.0" fill="none" stroke="#ff0000" stroke-width="2.6" stroke-linejoin="round"/><polyline clip-path="url(#plotclip)" points="45.0,350.0 55.3,380.0 86.5,380.0 101.0,410.0 115.1,380.0 157.1,380.0 173.3,410.0 201.8,410.0 216.3,380.0 273.4,380.0 289.0,410.0 304.4,410.0 319.7,380.0 376.9,380.0 391.1,350.0 408.5,410.0 569.9,410.0 584.4,380.0 612.1,380.0 625.8,350.0 706.0,350.0" fill="none" stroke="#0000ff" stroke-width="2.6" stroke-linejoin="round"/><polyline clip-path="url(#plotclip)" points="45.0,380.0 54.9,350.0 73.1,410.0 86.0,410.0 114.3,350.0 128.0,350.0 142.6,320.0 157.1,320.0 173.3,380.0 186.5,380.0 201.0,350.0 272.1,350.0 289.9,380.0 303.6,380.0 321.4,410.0 378.2,410.0 407.2,350.0 449.2,350.0 463.5,320.0 565.0,320.0 581.2,350.0 611.0,350.0 629.0,410.0 643.3,410.0 658.2,380.0 691.0,380.0" fill="none" stroke="#ffff00" stroke-width="2.6" stroke-linejoin="round"/><polyline clip-path="url(#plotclip)" points="45.0,410.0 55.3,410.0 69.9,350.0 99.0,350.0 113.5,320.0 128.0,320.0 141.8,350.0 157.1,350.0 171.7,320.0 448.4,320.0 464.6,380.0 569.0,380.0 583.6,410.0 614.2,410.0 628.8,380.0 642.8,380.0 658.2,410.0 697.0,410.0" fill="none" stroke="#008000" stroke-width="2.6" stroke-linejoin="round"/><polyline clip-path="url(#plotclip)" points="45.0,443.1 63.2,591.0 78.4,561.0 107.5,561.0 121.9,501.0 220.0,501.0 245.1,531.0 305.5,531.0 321.2,501.0 380.4,501.0 394.0,471.0 697.0,471.0" fill="none" stroke="#00ffff" stroke-width="2.6" stroke-linejoin="round"/><polyline clip-path="url(#plotclip)" points="45.0,471.0 58.0,471.0 72.9,440.0 219.7,440.0 237.3,471.0 369.9,471.0 396.4,501.0 704.0,501.0" fill="none" stroke="#800080" stroke-width="2.6" stroke-linejoin="round"/><polyline clip-path="url(#plotclip)" points="45.0,501.0 58.0,501.0 74.2,531.0 105.9,531.0 130.2,561.0 175.7,561.0 202.0,591.0 242.0,591.0 256.4,561.0 541.6,561.0 557.3,531.0 705.0,531.0" fill="none" stroke="#000000" stroke-width="2.6" stroke-linejoin="round"/><polyline clip-path="url(#plotclip)" points="45.0,531.0 59.6,531.0 74.2,501.0 105.9,501.0 120.8,471.0 221.6,471.0 236.5,440.0 694.0,440.0" fill="none" stroke="#800080" stroke-width="2.6" stroke-linejoin="round"/><polyline clip-path="url(#plotclip)" points="45.0,556.5 56.9,440.0 72.9,471.0 105.1,471.0 124.7,531.0 222.7,531.0 239.3,501.0 304.7,501.0 323.5,531.0 540.0,531.0 559.6,561.0 707.0,561.0" fill="none" stroke="#000080" stroke-width="2.6" stroke-linejoin="round"/><polyline clip-path="url(#plotclip)" points="45.0,591.0 63.2,561.0 84.4,591.0 184.0,591.0 198.0,561.0 239.6,561.0 263.1,591.0 704.0,591.0" fill="none" stroke="#008080" stroke-width="2.6" stroke-linejoin="round"/><rect x="45" y="290" width="720" height="330" fill="none" stroke="#000" stroke-width="2"/><line x1="45.5" y1="622" x2="45.5" y2="626" stroke="#808080" stroke-width="1"/><line x1="61.5" y1="622" x2="61.5" y2="624" stroke="#808080" stroke-width="1"/><line x1="78.5" y1="622" x2="78.5" y2="624" stroke="#808080" stroke-width="1"/><line x1="94.5" y1="622" x2="94.5" y2="624" stroke="#808080" stroke-width="1"/><line x1="110.5" y1="622" x2="110.5" y2="626" stroke="#808080" stroke-width="1"/><line x1="127.5" y1="622" x2="127.5" y2="624" stroke="#808080" stroke-width="1"/><line x1="143.5" y1="622" x2="143.5" y2="624" stroke="#808080" stroke-width="1"/><line x1="160.5" y1="622" x2="160.5" y2="624" stroke="#808080" stroke-width="1"/><line x1="176.5" y1="622" x2="176.5" y2="626" stroke="#808080" stroke-width="1"/><line x1="192.5" y1="622" x2="192.5" y2="624" stroke="#808080" stroke-width="1"/><line x1="209.5" y1="622" x2="209.5" y2="624" stroke="#808080" stroke-width="1"/><line x1="225.5" y1="622" x2="225.5" y2="624" stroke="#808080" stroke-width="1"/><line x1="241.5" y1="622" x2="241.5" y2="626" stroke="#808080" stroke-width="1"/><line x1="258.5" y1="622" x2="258.5" y2="624" stroke="#808080" stroke-width="1"/><line x1="274.5" y1="622" x2="274.5" y2="624" stroke="#808080" stroke-width="1"/><line x1="290.5" y1="622" x2="290.5" y2="624" stroke="#808080" stroke-width="1"/><line x1="307.5" y1="622" x2="307.5" y2="626" stroke="#808080" stroke-width="1"/><line x1="323.5" y1="622" x2="323.5" y2="624" stroke="#808080" stroke-width="1"/><line x1="340.5" y1="622" x2="340.5" y2="624" stroke="#808080" stroke-width="1"/><line x1="356.5" y1="622" x2="356.5" y2="624" stroke="#808080" stroke-width="1"/><line x1="372.5" y1="622" x2="372.5" y2="626" stroke="#808080" stroke-width="1"/><line x1="389.5" y1="622" x2="389.5" y2="624" stroke="#808080" stroke-width="1"/><line x1="405.5" y1="622" x2="405.5" y2="624" stroke="#808080" stroke-width="1"/><line x1="421.5" y1="622" x2="421.5" y2="624" stroke="#808080" stroke-width="1"/><line x1="438.5" y1="622" x2="438.5" y2="626" stroke="#808080" stroke-width="1"/><line x1="454.5" y1="622" x2="454.5" y2="624" stroke="#808080" stroke-width="1"/><line x1="470.5" y1="622" x2="470.5" y2="624" stroke="#808080" stroke-width="1"/><line x1="487.5" y1="622" x2="487.5" y2="624" stroke="#808080" stroke-width="1"/><line x1="503.5" y1="622" x2="503.5" y2="626" stroke="#808080" stroke-width="1"/><line x1="520.5" y1="622" x2="520.5" y2="624" stroke="#808080" stroke-width="1"/><line x1="536.5" y1="622" x2="536.5" y2="624" stroke="#808080" stroke-width="1"/><line x1="552.5" y1="622" x2="552.5" y2="624" stroke="#808080" stroke-width="1"/><line x1="569.5" y1="622" x2="569.5" y2="626" stroke="#808080" stroke-width="1"/><line x1="585.5" y1="622" x2="585.5" y2="624" stroke="#808080" stroke-width="1"/><line x1="601.5" y1="622" x2="601.5" y2="624" stroke="#808080" stroke-width="1"/><line x1="618.5" y1="622" x2="618.5" y2="624" stroke="#808080" stroke-width="1"/><line x1="634.5" y1="622" x2="634.5" y2="626" stroke="#808080" stroke-width="1"/><line x1="650.5" y1="622" x2="650.5" y2="624" stroke="#808080" stroke-width="1"/><line x1="667.5" y1="622" x2="667.5" y2="624" stroke="#808080" stroke-width="1"/><line x1="683.5" y1="622" x2="683.5" y2="624" stroke="#808080" stroke-width="1"/><line x1="700.5" y1="622" x2="700.5" y2="626" stroke="#808080" stroke-width="1"/><line x1="716.5" y1="622" x2="716.5" y2="624" stroke="#808080" stroke-width="1"/><line x1="732.5" y1="622" x2="732.5" y2="624" stroke="#808080" stroke-width="1"/><line x1="749.5" y1="622" x2="749.5" y2="624" stroke="#808080" stroke-width="1"/><line x1="765.5" y1="622" x2="765.5" y2="626" stroke="#808080" stroke-width="1"/><line x1="41" y1="320.5" x2="44" y2="320.5" stroke="#808080" stroke-width="1"/><line x1="41" y1="350.5" x2="44" y2="350.5" stroke="#808080" stroke-width="1"/><line x1="41" y1="380.5" x2="44" y2="380.5" stroke="#808080" stroke-width="1"/><line x1="41" y1="410.5" x2="44" y2="410.5" stroke="#808080" stroke-width="1"/><line x1="41" y1="440.5" x2="44" y2="440.5" stroke="#808080" stroke-width="1"/><line x1="41" y1="471.5" x2="44" y2="471.5" stroke="#808080" stroke-width="1"/><line x1="41" y1="501.5" x2="44" y2="501.5" stroke="#808080" stroke-width="1"/><line x1="41" y1="531.5" x2="44" y2="531.5" stroke="#808080" stroke-width="1"/><line x1="41" y1="561.5" x2="44" y2="561.5" stroke="#808080" stroke-width="1"/><line x1="41" y1="591.5" x2="44" y2="591.5" stroke="#808080" stroke-width="1"/><text x="45.5" y="635" text-anchor="middle" font-family="Liberation Serif,serif" font-size="13" fill="#000">0</text><text x="110.5" y="635" text-anchor="middle" font-family="Liberation Serif,serif" font-size="13" fill="#000">1</text><text x="176.5" y="635" text-anchor="middle" font-family="Liberation Serif,serif" font-size="13" fill="#000">2</text><text x="241.5" y="635" text-anchor="middle" font-family="Liberation Serif,serif" font-size="13" fill="#000">3</text><text x="307.5" y="635" text-anchor="middle" font-family="Liberation Serif,serif" font-size="13" fill="#000">4</text><text x="372.5" y="635" text-anchor="middle" font-family="Liberation Serif,serif" font-size="13" fill="#000">5</text><text x="438.5" y="635" text-anchor="middle" font-family="Liberation Serif,serif" font-size="13" fill="#000">6</text><text x="503.5" y="635" text-anchor="middle" font-family="Liberation Serif,serif" font-size="13" fill="#000">7</text><text x="569.5" y="635" text-anchor="middle" font-family="Liberation Serif,serif" font-size="13" fill="#000">8</text><text x="634.5" y="635" text-anchor="middle" font-family="Liberation Serif,serif" font-size="13" fill="#000">9</text><text x="700.5" y="635" text-anchor="middle" font-family="Liberation Serif,serif" font-size="13" fill="#000">10</text><text x="765.5" y="635" text-anchor="middle" font-family="Liberation Serif,serif" font-size="13" fill="#000">11</text><text x="39.5" y="324" text-anchor="end" font-family="Liberation Serif,serif" font-size="13" fill="#000">1</text><text x="39.5" y="354" text-anchor="end" font-family="Liberation Serif,serif" font-size="13" fill="#000">2</text><text x="39.5" y="384" text-anchor="end" font-family="Liberation Serif,serif" font-size="13" fill="#000">3</text><text x="39.5" y="414" text-anchor="end" font-family="Liberation Serif,serif" font-size="13" fill="#000">4</text><text x="39.5" y="444" text-anchor="end" font-family="Liberation Serif,serif" font-size="13" fill="#000">5</text><text x="39.5" y="475" text-anchor="end" font-family="Liberation Serif,serif" font-size="13" fill="#000">6</text><text x="39.5" y="505" text-anchor="end" font-family="Liberation Serif,serif" font-size="13" fill="#000">7</text><text x="39.5" y="535" text-anchor="end" font-family="Liberation Serif,serif" font-size="13" fill="#000">8</text><text x="39.5" y="565" text-anchor="end" font-family="Liberation Serif,serif" font-size="13" fill="#000">9</text><text x="39.5" y="595" text-anchor="end" font-family="Liberation Serif,serif" font-size="13" fill="#000">10</text><text transform="translate(21,455) rotate(-90)" text-anchor="middle" font-family="Liberation Serif,serif" font-size="12" fill="#000">Result</text><rect x="701.5" y="313.5" width="17" height="13" fill="#c0c0c0" stroke="#000" stroke-width="1"/><text x="710.0" y="324" text-anchor="middle" font-family="Liberation Serif,serif" font-size="13" fill="#000">1</text><rect x="706.5" y="343.5" width="17" height="13" fill="#c0c0c0" stroke="#000" stroke-width="1"/><text x="715.0" y="354" text-anchor="middle" font-family="Liberation Serif,serif" font-size="13" fill="#000">2</text><rect x="691.5" y="373.5" width="17" height="13" fill="#c0c0c0" stroke="#000" stroke-width="1"/><text x="700.0" y="384" text-anchor="middle" font-family="Liberation Serif,serif" font-size="13" fill="#000">3</text><rect x="697.5" y="403.5" width="17" height="13" fill="#c0c0c0" stroke="#000" stroke-width="1"/><text x="706.0" y="414" text-anchor="middle" font-family="Liberation Serif,serif" font-size="13" fill="#000">4</text><rect x="694.5" y="433.5" width="17" height="13" fill="#c0c0c0" stroke="#000" stroke-width="1"/><text x="703.0" y="444" text-anchor="middle" font-family="Liberation Serif,serif" font-size="13" fill="#000">8</text><rect x="697.5" y="464.5" width="17" height="13" fill="#c0c0c0" stroke="#000" stroke-width="1"/><text x="706.0" y="475" text-anchor="middle" font-family="Liberation Serif,serif" font-size="13" fill="#000">5</text><rect x="704.5" y="494.5" width="17" height="13" fill="#c0c0c0" stroke="#000" stroke-width="1"/><text x="713.0" y="505" text-anchor="middle" font-family="Liberation Serif,serif" font-size="13" fill="#000">6</text><rect x="705.5" y="524.5" width="17" height="13" fill="#c0c0c0" stroke="#000" stroke-width="1"/><text x="714.0" y="535" text-anchor="middle" font-family="Liberation Serif,serif" font-size="13" fill="#000">7</text><rect x="707.5" y="554.5" width="17" height="13" fill="#c0c0c0" stroke="#000" stroke-width="1"/><text x="716.0" y="565" text-anchor="middle" font-family="Liberation Serif,serif" font-size="13" fill="#000">9</text><rect x="704.5" y="584.5" width="23" height="13" fill="#c0c0c0" stroke="#000" stroke-width="1"/><text x="716.0" y="595" text-anchor="middle" font-family="Liberation Serif,serif" font-size="13" fill="#000">10</text></svg>
<div class="a" style="left:788px;top:250px;width:1px;height:399px;background:#fff"></div>
<div class="a" style="left:789px;top:250px;width:229px;height:1px;background:#808080"></div>
<div class="a" style="left:789px;top:250px;width:2px;height:398px;background:#808080"></div>
<div class="a" style="left:791px;top:267px;width:227px;height:1px;background:#fff"></div>
<div class="a" style="left:1018px;top:250px;width:1px;height:399px;background:#fff"></div>
<div class="a" style="left:790px;top:648px;width:229px;height:1px;background:#fff"></div>
<div class="a" style="left:791px;top:252px;width:15px;height:15px;border-top:1px solid #fff;border-left:1px solid #fff;border-bottom:1px solid #000;border-right:1px solid #000;"></div>
<div class="a" style="left:792px;top:253px;width:13px;height:13px;border-bottom:1px solid #808080;border-right:1px solid #808080;"></div>
<svg class="a" style="left:794px;top:254px" width="7" height="10"><path d="M3.5 0.5V10M1 2.5L3.5 0.5L6 2.5" fill="none" stroke="#000" stroke-width="1"/></svg>
<div class="t" style="left:814px;top:253px;">ﾄ<span style="position:relative;left:-2px">ﾞ</span>ﾗｲﾊ<span style="position:relative;left:-2px">ﾞ</span>ｰ</div>
<div class="t" style="left:895px;top:253px;">周回</div>
<div class="t" style="left:926px;top:253px;">ﾗｯﾌ<span style="position:relative;left:-2px">ﾟ</span>ﾀｲﾑ</div>
<div class="t" style="left:978px;top:253px;">ﾋｯﾄ</div>
<div class="a" style="left:790px;top:268px;width:228px;height:381px;border-top:1px solid #808080;border-left:1px solid #808080;border-bottom:1px solid #fff;border-right:1px solid #fff;"></div>
<div class="a" style="left:791px;top:269px;width:226px;height:379px;border-top:1px solid #000;border-left:1px solid #000;border-bottom:1px solid #c0c0c0;border-right:1px solid #c0c0c0;background:#fff;overflow:hidden;"><div style="position:absolute;left:13px;top:-1px;font-size:12px;"><div style="height:12px;line-height:12px;white-space:pre;"> 9:都築　　佳祐 40L  18.550" 32</div><div style="height:12px;line-height:12px;white-space:pre;">10:都築　　翔太 37L  21.140" 50</div><div style="height:12px;line-height:12px;white-space:pre;"> 2:穴井　　和弘 46L  13.950" 29</div><div style="height:12px;line-height:12px;white-space:pre;"> 7:滝川　　浩輝 41L  17.540" 24</div><div style="height:12px;line-height:12px;white-space:pre;"> 6:林　　　武史 42L  17.980" 24</div><div style="height:12px;line-height:12px;white-space:pre;"> 1:福島　　徳仁 46L  13.750" 25</div><div style="height:12px;line-height:12px;white-space:pre;"> 5:砂田　　尚志 43L  14.350" 27</div><div style="height:12px;line-height:12px;white-space:pre;"> 4:黒川　　美徳 45L  14.630" 25</div><div style="height:12px;line-height:12px;white-space:pre;"> 8:福島　　徳雄 44L  13.510" 27</div><div style="height:12px;line-height:12px;white-space:pre;"> 3:黒田　　尚希 45L  12.530" 25</div><div style="height:12px;line-height:12px;white-space:pre;"> 2:穴井　　和弘 45L  13.190" 27</div><div style="height:12px;line-height:12px;white-space:pre;"> 9:都築　　佳祐 39L  15.500" 29</div><div style="height:12px;line-height:12px;white-space:pre;"> 7:滝川　　浩輝 40L  14.490" 27</div><div style="height:12px;line-height:12px;white-space:pre;"> 1:福島　　徳仁 45L  13.260" 27</div><div style="height:12px;line-height:12px;white-space:pre;"> 6:林　　　武史 41L  13.970" 25</div><div style="height:12px;line-height:12px;white-space:pre;">10:都築　　翔太 36L  20.740" 30</div><div style="height:12px;line-height:12px;white-space:pre;"> 5:砂田　　尚志 42L  13.350" 25</div><div style="height:12px;line-height:12px;white-space:pre;"> 4:黒川　　美徳 44L  13.460" 26</div><div style="height:12px;line-height:12px;white-space:pre;"> 8:福島　　徳雄 43L  13.790" 29</div><div style="height:12px;line-height:12px;white-space:pre;"> 3:黒田　　尚希 44L  13.570" 25</div><div style="height:12px;line-height:12px;white-space:pre;"> 2:穴井　　和弘 44L  13.170" 28</div><div style="height:12px;line-height:12px;white-space:pre;"> 1:福島　　徳仁 44L  14.310" 25</div><div style="height:12px;line-height:12px;white-space:pre;"> 7:滝川　　浩輝 39L  15.140" 25</div><div style="height:12px;line-height:12px;white-space:pre;"> 9:都築　　佳祐 38L  15.630" 31</div><div style="height:12px;line-height:12px;white-space:pre;"> 6:林　　　武史 40L  14.070" 26</div><div style="height:12px;line-height:12px;white-space:pre;"> 5:砂田　　尚志 41L  13.080" 26</div><div style="height:12px;line-height:12px;white-space:pre;"> 4:黒川　　美徳 43L  15.880" 28</div><div style="height:12px;line-height:12px;white-space:pre;"> 8:福島　　徳雄 42L  13.380" 28</div><div style="height:12px;line-height:12px;white-space:pre;"> 3:黒田　　尚希 43L  12.940" 25</div><div style="height:12px;line-height:12px;white-space:pre;"> 2:穴井　　和弘 43L  12.740" 28</div><div style="height:12px;line-height:12px;white-space:pre;">10:都築　　翔太 35L  17.950" 29</div><div style="height:12px;line-height:12px;white-space:pre;"> 1:福島　　徳仁 43L  13.730" 26</div></div></div>
<div class="a" style="left:1000px;top:270px;width:16px;height:377px;background:#fff;background-image:conic-gradient(#c0c0c0 25%,#fff 0 50%,#c0c0c0 0 75%,#fff 0);background-size:2px 2px;"></div>
<div class="a" style="left:1000px;top:270px;width:16px;height:16px;border-top:1px solid #c0c0c0;border-left:1px solid #c0c0c0;border-bottom:1px solid #000;border-right:1px solid #000;"></div>
<div class="a" style="left:1001px;top:271px;width:14px;height:14px;border-top:1px solid #fff;border-left:1px solid #fff;border-bottom:1px solid #808080;border-right:1px solid #808080;background:#c0c0c0;"></div>
<svg class="a" style="left:1004px;top:276px" width="7" height="4"><polygon points="0,4 7,4 3.5,0" fill="#000"/></svg>
<div class="a" style="left:1000px;top:631px;width:16px;height:16px;border-top:1px solid #c0c0c0;border-left:1px solid #c0c0c0;border-bottom:1px solid #000;border-right:1px solid #000;"></div>
<div class="a" style="left:1001px;top:632px;width:14px;height:14px;border-top:1px solid #fff;border-left:1px solid #fff;border-bottom:1px solid #808080;border-right:1px solid #808080;background:#c0c0c0;"></div>
<svg class="a" style="left:1004px;top:637px" width="7" height="4"><polygon points="0,0 7,0 3.5,4" fill="#000"/></svg>
<div class="a" style="left:1000px;top:286px;width:16px;height:107px;border-top:1px solid #c0c0c0;border-left:1px solid #c0c0c0;border-bottom:1px solid #000;border-right:1px solid #000;"></div>
<div class="a" style="left:1001px;top:287px;width:14px;height:105px;border-top:1px solid #fff;border-left:1px solid #fff;border-bottom:1px solid #808080;border-right:1px solid #808080;background:#c0c0c0;"></div>
</div>
</body></html>
